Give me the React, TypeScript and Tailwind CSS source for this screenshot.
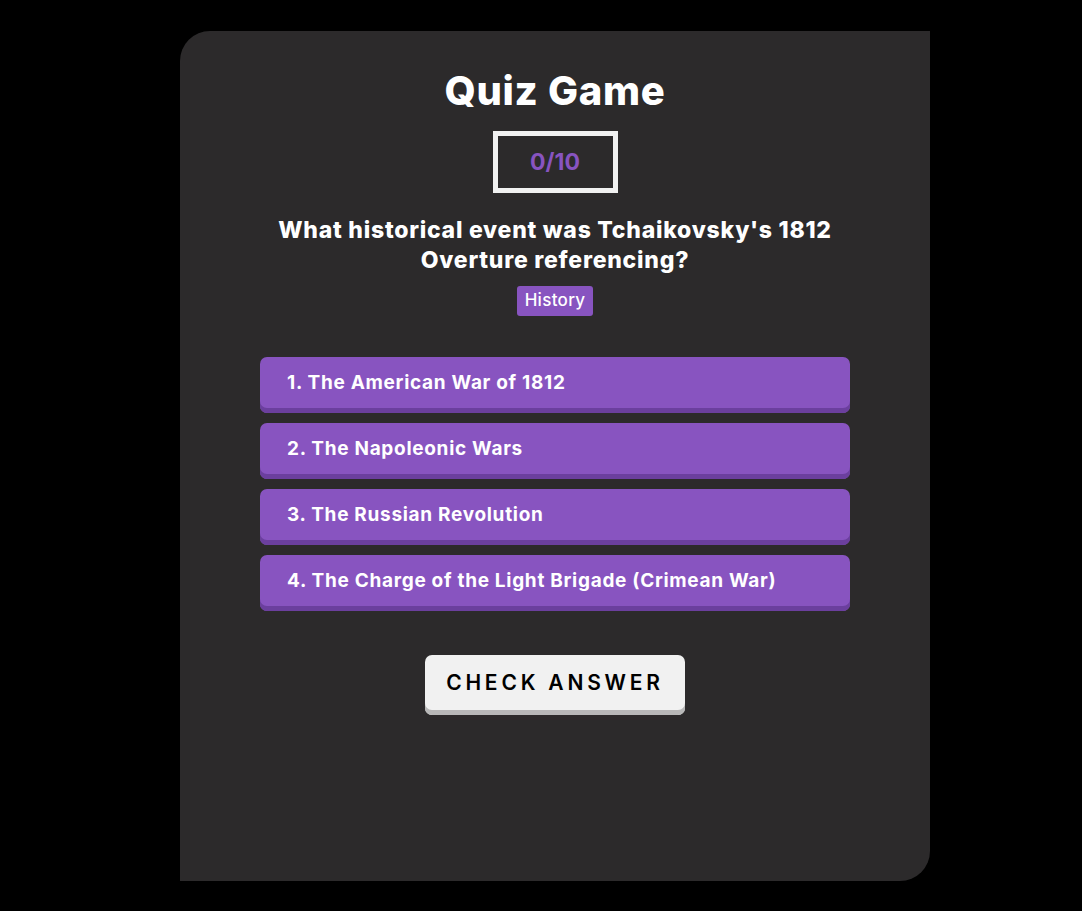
import React from "react";

const answers = [
  "1. The American War of 1812",
  "2. The Napoleonic Wars",
  "3. The Russian Revolution",
  "4. The Charge of the Light Brigade (Crimean War)",
];

export default function App() {
  return (
    <div
      className="min-h-[911px] w-full bg-black pt-[31px] pl-[180px]"
      style={{ fontFamily: "Inter, 'Noto Sans', sans-serif" }}
    >
      <div className="w-[750px] h-[850px] bg-[#2c2a2b] rounded-tl-[30px] rounded-br-[30px] flex flex-col items-center pt-[36px]">
        <h1 className="text-white text-[40px] font-extrabold leading-[48px] tracking-[0.7px]">Quiz Game</h1>
        <div className="mt-[16px] w-[125px] h-[62px] border-[5px] border-[#f1f1f1] flex items-center justify-center">
          <span className="text-[#8854c0] text-[23px] font-bold">0/10</span>
        </div>
        <p className="mt-[22px] w-[580px] text-center text-white text-[23px] font-extrabold leading-[30px] tracking-[0.75px]">
          What historical event was Tchaikovsky's 1812 Overture referencing?
        </p>
        <span className="mt-[11px] h-[30px] px-[8px] flex items-center bg-[#8854c0] text-white text-[17px] font-medium rounded-[3px] tracking-[0.3px]">
          History
        </span>
        <div className="mt-[41px] w-[590px] flex flex-col gap-[10px]">
          {answers.map((a) => (
            <div
              key={a}
              className="h-[56px] rounded-[7px] bg-[#8854c0] shadow-[inset_0_-5px_0_#6b3f9e] pl-[27px] pb-[3px] flex items-center text-white text-[19px] font-bold tracking-[0.7px]"
            >
              {a}
            </div>
          ))}
        </div>
        <button className="mt-[44px] w-[260px] h-[60px] rounded-[7px] bg-[#f1f1f1] shadow-[inset_0_-5px_0_#b8b8b8] pb-[5px] flex items-center justify-center text-black text-[21px] font-semibold tracking-[3.8px] uppercase">
          Check Answer
        </button>
      </div>
    </div>
  );
}
